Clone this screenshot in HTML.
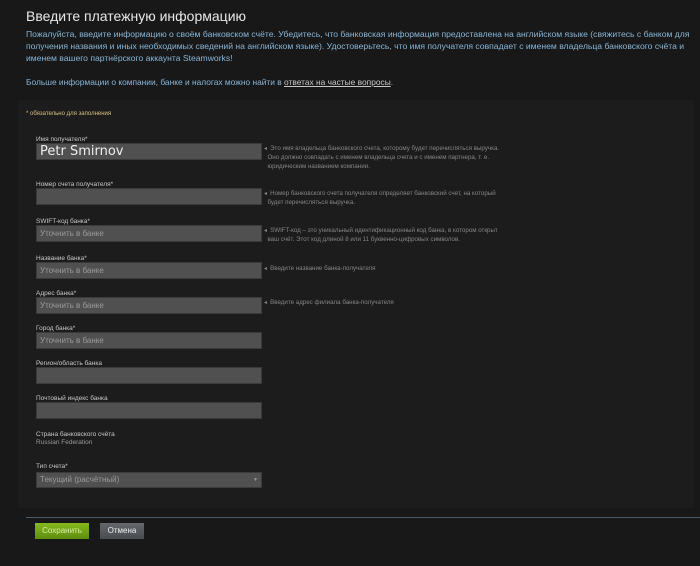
<!DOCTYPE html>
<html><head><meta charset="utf-8"><style>
body{margin:0;width:700px;height:566px;background:#181818;font-family:"Liberation Sans",sans-serif;position:relative;overflow:hidden}
.a{position:absolute;white-space:nowrap}
.panel{position:absolute;left:18px;top:100px;width:676px;height:408px;background:#1c1c1c}
.lbl{position:absolute;left:36px;font-size:6.5px;color:#c8c8c8}
.inp{position:absolute;left:36px;width:226px;height:17px;background:#505050;box-shadow:inset 0 0 0 1px #3a3a3a;color:#9a9a9a;font-size:8px;line-height:17px;padding-left:4px;box-sizing:border-box}
.hint{position:absolute;left:264px;font-size:6.2px;color:#858585;line-height:9px;width:250px}
.hint:before{content:"◂";margin-right:3px}
</style></head><body>
<div class="panel"></div>
<div class="a" style="left:26px;top:8px;font-size:14px;color:#e8e8e8">Введите платежную информацию</div>
<div class="a" style="left:26px;top:28px;font-size:8.6px;color:#88b6d8;line-height:12px">Пожалуйста, введите информацию о своём банковском счёте. Убедитесь, что банковская информация предоставлена на английском языке (свяжитесь с банком для<br>получения названия и иных необходимых сведений на английском языке). Удостоверьтесь, что имя получателя совпадает с именем владельца банковского счёта и<br>именем вашего партнёрского аккаунта Steamworks!</div>
<div class="a" style="left:26px;top:77px;font-size:8.4px;color:#88b6d8">Больше информации о компании, банке и налогах можно найти в <u style="color:#c8c8c8">ответах на частые вопросы</u>.</div>
<div class="a" style="left:26px;top:111px;font-size:6px;color:#d8c080">* обязательно для заполнения</div>

<div class="lbl" style="top:136px">Имя получателя*</div>
<div class="inp" style="top:143px;color:#eee;font-size:13px;line-height:17px;font-family:'DejaVu Sans',sans-serif">Petr Smirnov</div>
<div class="hint" style="top:144px">Это имя владельца банковского счета, которому будет перечисляться выручка.<br>&nbsp;&nbsp;Оно должно совпадать с именем владельца счета и с именем партнера, т. е.<br>&nbsp;&nbsp;юридическим названием компании.</div>

<div class="lbl" style="top:181px">Номер счета получателя*</div>
<div class="inp" style="top:188px"></div>
<div class="hint" style="top:189px">Номер банковского счета получателя определяет банковский счет, на который<br>&nbsp;&nbsp;будет перечисляться выручка.</div>

<div class="lbl" style="top:218px">SWIFT-код банка*</div>
<div class="inp" style="top:225px">Уточнить в банке</div>
<div class="hint" style="top:226px">SWIFT-код – это уникальный идентификационный код банка, в котором открыт<br>&nbsp;&nbsp;ваш счёт. Этот код длиной 8 или 11 буквенно-цифровых символов.</div>

<div class="lbl" style="top:255px">Название банка*</div>
<div class="inp" style="top:262px">Уточнить в банке</div>
<div class="hint" style="top:264px">Введите название банка-получателя</div>

<div class="lbl" style="top:290px">Адрес банка*</div>
<div class="inp" style="top:297px">Уточнить в банке</div>
<div class="hint" style="top:298px">Введите адрес филиала банка-получателя</div>

<div class="lbl" style="top:325px">Город банка*</div>
<div class="inp" style="top:332px">Уточнить в банке</div>

<div class="lbl" style="top:360px">Регион/область банка</div>
<div class="inp" style="top:367px"></div>

<div class="lbl" style="top:395px">Почтовый индекс банка</div>
<div class="inp" style="top:402px"></div>

<div class="lbl" style="top:431px">Страна банковского счёта</div>
<div class="lbl" style="top:439px;color:#9a9a9a">Russian Federation</div>

<div class="lbl" style="top:463px">Тип счета*</div>
<div class="inp" style="top:472px;height:16px;line-height:16px">Текущий (расчётный)<span style="position:absolute;right:4px;font-size:5px">▼</span></div>

<div class="a" style="left:26px;top:517px;width:674px;height:1px;background:#4a5a66"></div>
<div class="a" style="left:35px;top:523px;width:54px;height:16px;background:linear-gradient(#86b81c,#5e8c10);color:#d8f0a0;font-size:8px;line-height:16px;text-align:center">Сохранить</div>
<div class="a" style="left:100px;top:523px;width:44px;height:16px;background:linear-gradient(#64686c,#484c50);color:#eee;font-size:8px;line-height:16px;text-align:center">Отмена</div>
</body></html>
